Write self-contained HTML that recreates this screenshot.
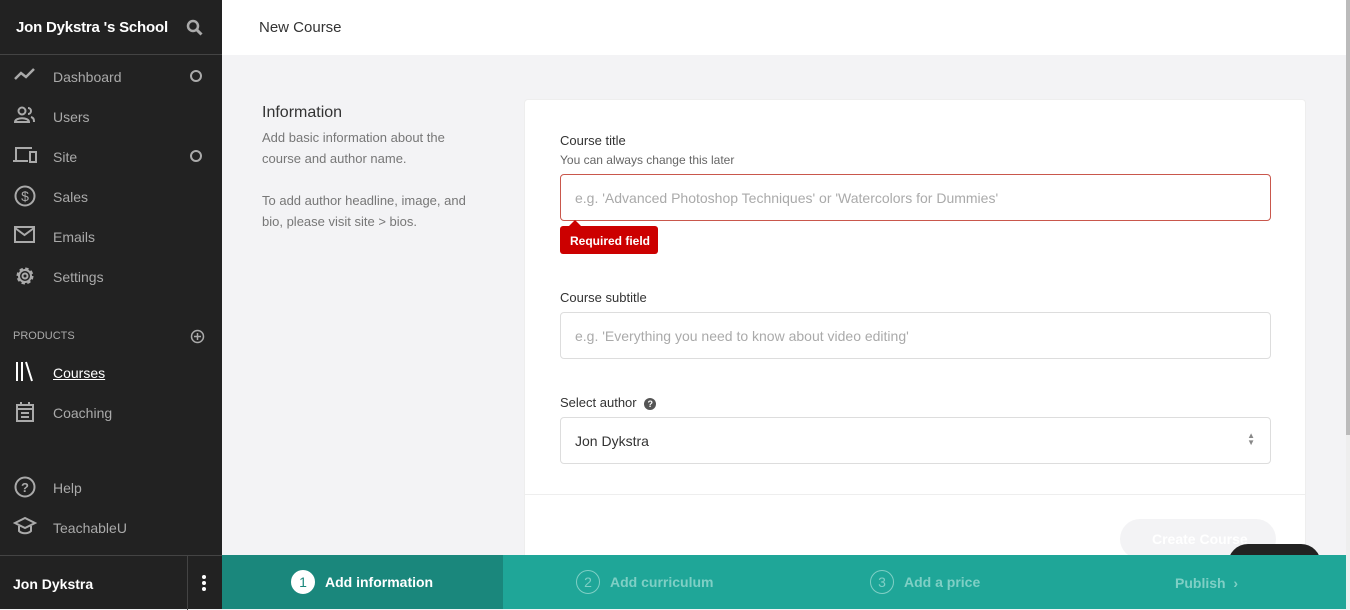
<!DOCTYPE html>
<html><head><meta charset="utf-8"><style>
*{box-sizing:border-box;margin:0;padding:0}
body{width:1350px;height:609px;overflow:hidden;font-family:"Liberation Sans",sans-serif;background:#f3f3f5;position:relative}
.sb{position:absolute;left:0;top:0;width:222px;height:609px;background:#222}
.brand{height:55px;border-bottom:1px solid #444;color:#fff;font-weight:bold;font-size:15px;padding:19px 0 0 16px;position:relative;letter-spacing:-0.2px}
.nav{position:absolute;left:0;color:#aaa;font-size:14px;width:222px;height:20px}
.nav svg{position:absolute;left:13px;top:-2px}
.nav span{position:absolute;left:53px;top:2px}
.dot{position:absolute;left:190px;top:3px;width:12px;height:12px;border:2px solid #aaa;border-radius:50%}
.foot{position:absolute;left:0;top:555px;width:222px;height:54px;border-top:1px solid #444;color:#fff;font-weight:bold;font-size:14px}
.top{position:absolute;left:222px;top:0;width:1124px;height:55px;background:#fff;font-size:15px;color:#333;padding:19px 0 0 37px}
.card{position:absolute;left:524px;top:99px;width:782px;height:460px;background:#fff;border-radius:4px;border:1px solid #eee}
.lbl{position:absolute;left:35px;font-size:13px;color:#333}
.inp{position:absolute;left:35px;width:711px;height:47px;border:1px solid #ddd;border-radius:4px;font-size:14px;color:#aaa;padding:15px 0 0 14px}
.bar{position:absolute;left:222px;top:555px;width:1124px;height:54px;background:#1fa698;font-size:14px;font-weight:bold;color:#7fcfc5}
.step{position:absolute;top:15px}
.c{display:inline-block;width:24px;height:24px;border:1px solid #7fcfc5;border-radius:50%;text-align:center;line-height:22px;margin-right:10px;font-weight:normal}
</style></head><body>
<div class="sb">
<div class="brand">Jon Dykstra 's School
<svg style="position:absolute;left:186px;top:19px" width="17" height="17" viewBox="0 0 17 17"><circle cx="7" cy="7" r="5" fill="none" stroke="#aaa" stroke-width="2.5"/><path d="M11 11l4.5 4.5" stroke="#aaa" stroke-width="3"/></svg></div>
<div class="nav" style="top:67px"><svg width="24" height="20"><path d="M2 14l6-6 5 4 8-8" fill="none" stroke="#aaa" stroke-width="2.5"/></svg><span>Dashboard</span><i class="dot"></i></div>
<div class="nav" style="top:107px"><svg width="24" height="20"><circle cx="9" cy="6" r="3.5" fill="none" stroke="#aaa" stroke-width="2"/><path d="M2 17c0-5 14-5 14 0z M15 3a3 3 0 010 6 M18 12c3 1 3 3 3 5" fill="none" stroke="#aaa" stroke-width="2"/></svg><span>Users</span></div>
<div class="nav" style="top:147px"><svg width="26" height="20"><path d="M3 15V3h16 M0 16h15 M17 7h6v10h-6z" fill="none" stroke="#aaa" stroke-width="2"/></svg><span>Site</span><i class="dot"></i></div>
<div class="nav" style="top:187px"><svg width="24" height="22"><circle cx="12" cy="11" r="9.5" fill="none" stroke="#aaa" stroke-width="2"/><text x="12" y="16" font-size="14" fill="#aaa" text-anchor="middle" font-family="Liberation Sans">$</text></svg><span>Sales</span></div>
<div class="nav" style="top:227px"><svg width="24" height="20"><rect x="2" y="2" width="19" height="15" fill="none" stroke="#aaa" stroke-width="2"/><path d="M2 3l9.5 7 9.5-7" fill="none" stroke="#aaa" stroke-width="2"/></svg><span>Emails</span></div>
<div class="nav" style="top:267px"><svg width="24" height="22"><circle cx="12" cy="11" r="6.5" fill="none" stroke="#aaa" stroke-width="4" stroke-dasharray="3 2.1"/><circle cx="12" cy="11" r="6" fill="#222" stroke="#aaa" stroke-width="2"/><circle cx="12" cy="11" r="2.5" fill="none" stroke="#aaa" stroke-width="2"/></svg><span>Settings</span></div>
<div style="position:absolute;left:13px;top:330px;font-size:11px;color:#aaa">PRODUCTS</div>
<svg style="position:absolute;left:190px;top:329px" width="15" height="15"><circle cx="7.5" cy="7.5" r="6" fill="none" stroke="#aaa" stroke-width="1.5"/><path d="M7.5 4v7M4 7.5h7" stroke="#aaa" stroke-width="1.5"/></svg>
<div class="nav" style="top:363px;color:#fff"><svg width="24" height="22" style="left:14px"><path d="M3 1v19M8 1v19M12 1l6 19" stroke="#fff" stroke-width="2"/></svg><span style="text-decoration:underline">Courses</span></div>
<div class="nav" style="top:403px"><svg width="24" height="22"><rect x="4" y="4" width="16" height="16" fill="none" stroke="#aaa" stroke-width="2"/><path d="M8 1v4M16 1v4M4 8h16M8 12h8M8 16h8" stroke="#aaa" stroke-width="2"/></svg><span>Coaching</span></div>
<div class="nav" style="top:478px"><svg width="24" height="22"><circle cx="12" cy="11" r="9.5" fill="none" stroke="#aaa" stroke-width="2"/><text x="12" y="16" font-size="13" font-weight="bold" fill="#aaa" text-anchor="middle" font-family="Liberation Sans">?</text></svg><span>Help</span></div>
<div class="nav" style="top:518px"><svg width="24" height="20"><path d="M2 7l10-5 10 5-10 5z M6 10v5c3 3 9 3 12 0v-5" fill="none" stroke="#aaa" stroke-width="2"/></svg><span>TeachableU</span></div>
<div class="foot"><span style="position:absolute;left:13px;top:20px">Jon Dykstra</span><div style="position:absolute;left:187px;top:0;width:1px;height:54px;background:#444"></div><svg style="position:absolute;left:201px;top:18px" width="6" height="18"><circle cx="3" cy="3" r="2" fill="#fff"/><circle cx="3" cy="9" r="2" fill="#fff"/><circle cx="3" cy="15" r="2" fill="#fff"/></svg></div>
</div>
<div class="top">New Course</div>
<div style="position:absolute;left:1346px;top:0;width:4px;height:609px;background:#eee"><div style="width:4px;height:435px;background:#bbb"></div></div>
<div style="position:absolute;left:262px;top:104px;font-size:16px;color:#333">Information</div>
<div style="position:absolute;left:262px;top:127px;font-size:13px;color:#777;line-height:21px;width:212px">Add basic information about the course and author name.<br><br>To add author headline, image, and bio, please visit site &gt; bios.</div>
<div class="card">
<div class="lbl" style="top:33px">Course title</div>
<div class="lbl" style="top:53px;font-size:12px;color:#666">You can always change this later</div>
<div class="inp" style="top:74px;border-color:#c9574c">e.g. 'Advanced Photoshop Techniques' or 'Watercolors for Dummies'</div>
<div style="position:absolute;left:35px;top:126px;width:98px;height:28px;background:#c00;border-radius:3px;color:#fff;font-size:12px;font-weight:bold;padding:8px 0 0 10px">Required field</div>
<div style="position:absolute;left:44px;top:120px;border:6px solid transparent;border-top:0;border-bottom-color:#c00"></div>
<div class="lbl" style="top:190px">Course subtitle</div>
<div class="inp" style="top:212px">e.g. 'Everything you need to know about video editing'</div>
<div class="lbl" style="top:295px">Select author <span style="display:inline-block;width:12px;height:12px;border-radius:50%;background:#555;color:#fff;font-size:9px;text-align:center;line-height:12px;font-weight:bold;margin-left:4px">?</span></div>
<div class="inp" style="top:317px;color:#333">Jon Dykstra<span style="position:absolute;right:15px;top:14px;font-size:8px;color:#888;line-height:7px">▲<br>▼</span></div>
<div style="position:absolute;left:0;top:394px;width:780px;height:1px;background:#eee"></div>
<div style="position:absolute;left:595px;top:419px;width:156px;height:40px;background:#f3f3f5;border-radius:20px;color:#fff;font-weight:bold;font-size:14px;padding:12px 0 0 32px">Create Course</div>
</div>
<div style="position:absolute;left:1228px;top:544px;width:93px;height:20px;background:#222;border-radius:20px 20px 0 0"></div>
<div class="bar">
<div style="position:absolute;left:0;top:0;width:281px;height:54px;background:#1a877c"></div>
<div class="step" style="left:69px;color:#fff"><span class="c" style="background:#fff;color:#1a877c;border-color:#fff">1</span>Add information</div>
<div class="step" style="left:354px"><span class="c">2</span>Add curriculum</div>
<div class="step" style="left:648px"><span class="c">3</span>Add a price</div>
<div class="step" style="left:953px;top:20px">Publish &nbsp;›</div>
</div>
</body></html>
